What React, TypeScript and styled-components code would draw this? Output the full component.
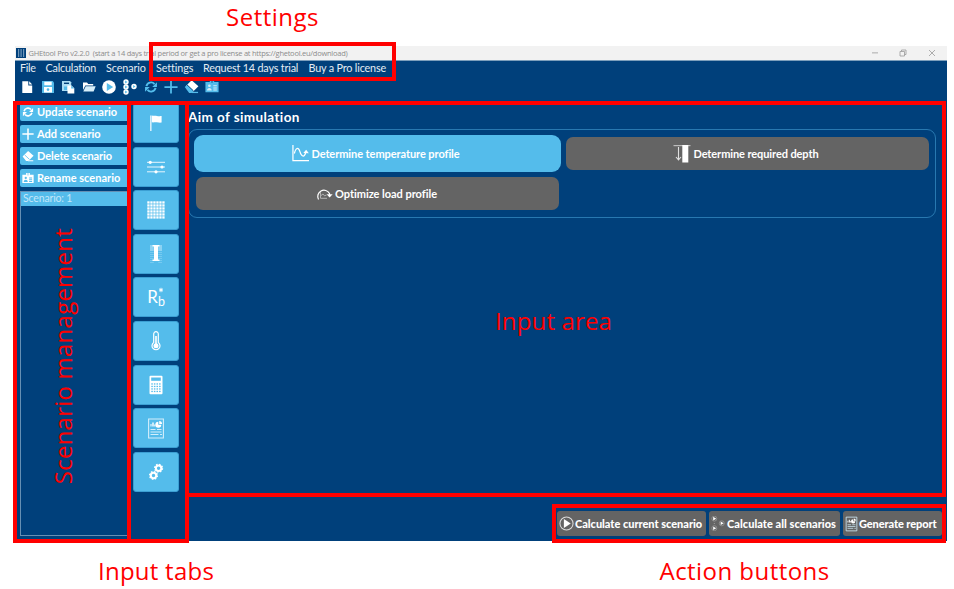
import React from 'react';
import styled, { createGlobalStyle } from 'styled-components';

const NAVY = '#00407b';
const SKY = '#54bceb';
const GREY = '#646464';
const RED = '#ff0000';

const GlobalStyle = createGlobalStyle`
  * { box-sizing: border-box; }
  body { margin: 0; background: #fff; overflow: hidden; }
`;

const Page = styled.div`
  position: relative;
  width: 954px;
  height: 589px;
  padding: 46px 7px 48px 15px;
  background: #fff;
  font-family: Lato, 'Open Sans', sans-serif;
`;

const AppWindow = styled.div`
  display: flex;
  flex-direction: column;
  width: 932px;
  height: 495px;
  background: ${NAVY};
`;

const TitleBar = styled.header`
  display: flex;
  align-items: center;
  height: 15px;
  flex: none;
  background: #f2f2f2;
  border-bottom: 1px solid #7d9fbc;
`;

const TitleText = styled.span`
  flex: 1;
  margin-left: 2.5px;
  color: #8c8c8c;
  font: 400 7.5px/14px 'Open Sans', sans-serif;
  letter-spacing: -0.25px;
  white-space: pre;
`;

const WindowControls = styled.div`
  display: flex;
  align-items: center;
  gap: 20.5px;
  padding-right: 11.5px;
`;

const MenuBar = styled.nav`
  display: flex;
  gap: 10px;
  height: 15px;
  padding-left: 5px;
  flex: none;
`;

const MenuItem = styled.span<{ $width: number; $spacing: number }>`
  width: ${(p) => p.$width}px;
  color: #e4ecf3;
  font-size: 10.8px;
  line-height: 14px;
  letter-spacing: ${(p) => p.$spacing}px;
  white-space: nowrap;
`;

const ToolBar = styled.div`
  display: flex;
  align-items: center;
  height: 23px;
  padding: 0 0 2px 4px;
  gap: 4.6px;
  flex: none;
`;

const Icon = styled.svg<{ $w?: number; $h?: number }>`
  display: block;
  flex: none;
  width: ${(p) => p.$w ?? 16}px;
  height: ${(p) => p.$h ?? p.$w ?? 16}px;
  fill: currentColor;
  color: #fff;
`;

const ToolSlot = styled.span`
  display: flex;
  justify-content: center;
  width: 16px;
`;

const Body = styled.div`
  display: grid;
  grid-template-columns: 118px 46px 1fr;
  flex: 1;
  min-height: 0;
`;

const Sidebar = styled.aside`
  display: flex;
  flex-direction: column;
  gap: 3.7px;
  padding: 4.4px 3px 5px 5px;
`;

const ScenarioButton = styled.button`
  display: flex;
  align-items: center;
  flex: none;
  gap: 3px;
  height: 18.1px;
  padding: 0 0 0 2px;
  border: 0;
  border-radius: 2px;
  background: ${SKY};
  color: #fff;
`;

const Label = styled.span<{ $weight?: number; $spacing?: number }>`
  font: ${(p) => p.$weight ?? 700} 11px/14px Lato, 'Open Sans', sans-serif;
  letter-spacing: ${(p) => p.$spacing ?? 0}px;
  white-space: nowrap;
  color: #fff;
`;

const ScenarioList = styled.div`
  flex: 1;
  border: 1px solid #668fb3;
  border-right: 0;
`;

const ScenarioItem = styled.div`
  height: 14px;
  padding-left: 2px;
  background: ${SKY};
  color: #c3e7f9;
  font-size: 10.5px;
  line-height: 13px;
  letter-spacing: -0.15px;
`;

const Tabs = styled.nav`
  display: flex;
  flex-direction: column;
  gap: 3.6px;
  padding-top: 4px;
`;

const Tab = styled.button`
  display: flex;
  align-items: center;
  justify-content: center;
  flex: none;
  height: 40px;
  padding: 0;
  border: 1px solid #3c9fd3;
  border-radius: 3px;
  background: ${SKY};
`;

const Main = styled.main`
  display: flex;
  flex-direction: column;
  min-width: 0;
  padding: 11px 11px 0 9px;
`;

const Heading = styled.h1`
  margin: 0;
  color: #fff;
  font-size: 13.5px;
  font-weight: 700;
  line-height: 15px;
  letter-spacing: 0.4px;
`;

const OptionGroup = styled.section`
  display: grid;
  grid-template-columns: 367px 363px;
  grid-template-rows: 37px 33px;
  gap: 5px;
  align-items: center;
  justify-items: center;
  height: 89px;
  margin-top: 4px;
  padding: 5px;
  border: 1px solid #2878b0;
  border-radius: 9px;
`;

const Option = styled.button<{ $selected?: boolean }>`
  display: flex;
  align-items: center;
  justify-content: center;
  gap: 2px;
  width: ${(p) => (p.$selected ? 367 : 363)}px;
  height: ${(p) => (p.$selected ? 37 : 33)}px;
  padding: 0 3px 0 0;
  border: 0;
  border-radius: ${(p) => (p.$selected ? 9 : 7)}px;
  background: ${(p) => (p.$selected ? SKY : GREY)};
`;

const Actions = styled.footer`
  display: flex;
  justify-content: flex-end;
  gap: 3px;
  margin: auto -6px 5px 0;
`;

const ActionButton = styled.button<{ $width: number }>`
  display: flex;
  align-items: center;
  gap: 1px;
  width: ${(p) => p.$width}px;
  height: 25px;
  padding: 0 0 0 2px;
  border: 0;
  border-radius: 3px;
  background: ${GREY};
`;

const Highlight = styled.div<{ $x: number; $y: number; $w: number; $h: number }>`
  position: absolute;
  left: ${(p) => p.$x}px;
  top: ${(p) => p.$y}px;
  width: ${(p) => p.$w}px;
  height: ${(p) => p.$h}px;
  border: 4px solid ${RED};
  pointer-events: none;
`;

const Note = styled.span<{ $x: number; $y: number; $spacing?: number }>`
  position: absolute;
  left: ${(p) => p.$x}px;
  top: ${(p) => p.$y}px;
  color: ${RED};
  font: 400 24px/32px 'Open Sans', 'Noto Sans', sans-serif;
  letter-spacing: ${(p) => p.$spacing ?? 0}px;
  white-space: nowrap;
`;

const VerticalNote = styled(Note)`
  writing-mode: vertical-rl;
  transform: rotate(180deg);
`;

type Size = { w?: number; h?: number };

const Refresh = ({ w = 12, tint = '#fff' }: { w?: number; tint?: string }) => (
  <Icon viewBox="0 0 16 16" $w={w}>
    <g fill="none" stroke={tint} strokeWidth="2.2">
      <path d="M2.8 7A5.3 5.3 0 0 1 12 4.600" />
      <path d="M13.2 9A5.3 5.3 0 0 1 4 11.400" />
    </g>
    <path fill={tint} d="M14.800 2.500v5.500H9.400zM1.200 13.500V8h5.400z" />
  </Icon>
);

const Plus = ({ w = 12, tint = '#fff' }: { w?: number; tint?: string }) => (
  <Icon viewBox="0 0 16 16" $w={w}>
    <path fill="none" stroke={tint} strokeWidth="2" d="M8 .5v15M.5 8h15" />
  </Icon>
);

const Eraser = ({ w = 12, tint = '#fff', cut = SKY }: { w?: number; tint?: string; cut?: string }) => (
  <Icon viewBox="0 0 16 16" $w={w}>
    <path fill="#fff" d="M8.2 1.2 15.4 7.6 9.5 13.5 2.5 7z" />
    <path fill={tint} d="M.8 8.5 3.3 6 10.2 12.4 8 14.8H5.5z" />
    <path stroke={cut} strokeWidth="1" d="M3.2 6.2 10 12.6" />
    <path fill={tint} d="M8 13.7h7v1.3H8z" />
  </Icon>
);

const Badge = ({ w = 13, tint = '#fff', cut = SKY }: { w?: number; tint?: string; cut?: string }) => (
  <Icon viewBox="0 0 16 14" $w={w} $h={w * 0.88}>
    <path fill={tint} d="M.5 2.2h5V0h2v3.2h1V0h2v2.2h5V14H.5z" />
    <circle cx="5" cy="6.6" r="1.5" fill={cut} />
    <path fill={cut} d="M2.3 12c0-4 5.4-4 5.4 0zM9.5 6h4v1.2h-4zM9.5 8.4h4v1.2h-4zM9.5 10.8h4V12h-4z" />
  </Icon>
);

const NewFile = () => (
  <Icon viewBox="0 0 16 16">
    <path d="M3.3 2.3h6v4.2h3.9v7.5H3.3z" />
    <path d="m10.2 2.3 3 3.2h-3z" />
  </Icon>
);

const Save = () => (
  <Icon viewBox="0 0 16 16">
    <path fill={SKY} d="M2 2h10.7L14 3.4V14H2z" />
    <path d="M4.3 2.8h7.4v3.4H4.3zM4 8h8v5.6H4z" />
    <circle cx="8" cy="10.6" r="1.3" fill={SKY} />
  </Icon>
);

const SaveAs = () => (
  <Icon viewBox="0 0 16 16">
    <path fill="#a9dcf4" d="M2 2h8l1.2 1.2V12H2z" />
    <path fill={NAVY} d="M4 3.6h5v1.4H4z" />
    <path fill={SKY} d="M4 7.5h3V11H4z" />
    <path d="M7.5 6.5h4l2.8 2.7V14.500H7.5z" />
    <path fill={SKY} d="M11.2 6.5v3h3z" />
  </Icon>
);

const Folder = () => (
  <Icon viewBox="0 0 16 16">
    <path d="M2 3.500h4l1.2 1.5h5V6.500H4.3L2 11z" />
    <path fill="#d6eefa" d="M4.7 7.300h10L12.6 12.500H2.3z" />
  </Icon>
);

const Play = () => (
  <Icon viewBox="0 0 16 16">
    <circle cx="8" cy="8" r="6.8" />
    <path fill={SKY} d="M5.800 4 12.200 8l-6.400 4z" />
  </Icon>
);

const PlayMany = () => (
  <Icon viewBox="0 0 16 16">
    {[[4, 3], [4, 8], [4, 13], [12, 7.5]].map(([x, y]) => (
      <g key={`${x}-${y}`}>
        <circle cx={x} cy={y} r="2.700" />
        <path fill={SKY} d={`M${x - 0.9} ${y - 1.4}l2.4 1.4-2.4 1.4z`} />
      </g>
    ))}
  </Icon>
);

const Flag = () => (
  <Icon viewBox="0 0 18 18" $w={18}>
    <path fill="#d3eefb" d="M3 1.5h1.6v15.5H3z" />
    <path d="M4.8 1.5c2 .7 3 .1 5 .4 1.500.3 3 .5 4.800.2v6.400c-2 .4-3-.2-4.800-.3-2-.2-3 .4-5 .1z" />
  </Icon>
);

const Sliders = () => (
  <Icon viewBox="0 0 18 18" $w={18}>
    <path stroke="#e6f5fd" strokeWidth="1" d="M0 4.300h18M0 9h18M0 13.800h18" />
    <circle cx="3.2" cy="4.300" r="1.6" />
    <circle cx="15" cy="9" r="1.6" />
    <circle cx="9" cy="13.800" r="1.6" />
  </Icon>
);

const steps = [0, 1, 2, 3, 4, 5];

const GridDots = () => (
  <Icon viewBox="0 0 18 18" $w={18}>
    {steps.map((r) =>
      steps.map((c) => <rect key={`${r}${c}`} x={0.3 + c * 3} y={0.3 + r * 3} width="2.300" height="2.300" />),
    )}
  </Icon>
);

const Borehole = () => (
  <Icon viewBox="0 0 18 20" $w={18} $h={20}>
    <g fill="#8dd3f3">
      <path d="M3 1h3.800v6H3zM11.200 1H15v6h-3.800z" />
      {[8, 10, 12, 14, 16, 18].map((y) => (
        <path key={y} opacity=".6" d={`M3 ${y}h3.800v1H3zM11.200 ${y}H15v1h-3.800z`} />
      ))}
    </g>
    <path d="M5.500 1h7v1.600H11V15.500h1.500V17h-7v-1.500H7V2.600H5.500z" />
  </Icon>
);

const Resistance = styled.span`
  display: grid;
  grid-template-columns: 11px 7px;
  grid-template-rows: 8px 12px;
  color: #fff;
  font: 400 17px/20px Lato, sans-serif;
`;

const Symbol = styled.span`
  grid-row: 1 / 3;
`;

const Subscript = styled.span`
  grid-column: 2;
  grid-row: 2;
  font-size: 12.5px;
  line-height: 14px;
`;

const Star = () => (
  <Icon viewBox="0 0 6 6" $w={6}>
    <path stroke="#fff" strokeWidth="1" d="M3 .8v4.400M1.100 1.900l3.800 2.200M4.900 1.900 1.100 4.100" />
  </Icon>
);

const Thermometer = () => (
  <Icon viewBox="0 0 18 20" $w={18} $h={20}>
    <path fill="none" stroke="#fff" strokeWidth="1.200" d="M6.700 11.500V3a2.300 2.300 0 0 1 4.600 0v8.500a4 4 0 1 1-4.600 0z" />
    <circle cx="9" cy="14.700" r="2.500" />
    <path d="M8.200 5h1.600v9H8.200z" />
  </Icon>
);

const Calculator = () => (
  <Icon viewBox="0 0 18 20" $w={18} $h={20}>
    <rect x="2.500" y=".7" width="13" height="18.500" rx="1" />
    <path fill={SKY} d="M4.200 2.500h9.600v3.300H4.200z" />
    {[0, 1, 2, 3].map((r) =>
      [0, 1, 2, 3].map((c) => (
        <rect key={`${r}${c}`} fill={SKY} x={4.3 + c * 2.6} y={8.3 + r * 2.5} width="1.500" height="1.300" />
      )),
    )}
  </Icon>
);

const Report = ({ w = 18, h = 21 }: Size) => (
  <Icon viewBox="0 0 18 21" $w={w} $h={h}>
    <path fill="none" stroke="#d3eefb" strokeWidth="1.100" d="M1.600 1h14.800v19H1.600z" />
    <path d="M11.300 3.800v3h3a3 3 0 1 1-3-3zM12.200 3a3 3 0 0 1 2.900 2.900h-2.900z" />
    <path d="M3.500 8.500V6h1v2.500zM5.300 8.500V4.500h1.400v4zM7.300 8.500v-2h1v2z" />
    <path fill="none" stroke="#d3eefb" d="M3.500 11.500h5M10 11.500h4.500M3.500 14h11M3.500 16.500h8M13 16.500h2" />
  </Icon>
);

const Gears = () => (
  <Icon viewBox="0 0 18 20" $w={18} $h={20}>
    <g fill="none" stroke="#fff">
      <g strokeWidth="2">
        <circle cx="11.600" cy="6.200" r="2.700" />
        <circle cx="6.500" cy="13.500" r="2.700" />
      </g>
      <g strokeWidth="1.300" strokeDasharray="1.600 1.450">
        <circle cx="11.600" cy="6.200" r="3.900" />
        <circle cx="6.500" cy="13.500" r="3.900" />
      </g>
    </g>
  </Icon>
);

const TemperatureProfile = () => (
  <Icon viewBox="0 0 18 18" $w={17}>
    <g fill="none" stroke="#fff" strokeWidth="1.300">
      <path d="M1 0v16.600h17" />
      <path d="M2.500 9C4 2.500 6.800 2 8.400 7c1.600 5.500 4.500 6.500 6.200 1" />
    </g>
    <path d="m12 8.500 3-3.400 2.800 3.700z" />
  </Icon>
);

const RequiredDepth = () => (
  <Icon viewBox="0 0 18 18" $w={18}>
    <path fill="#bbb" d="M.5 0h17v1.200H.5z" />
    <path d="M9.300 0h6v17.500h-6z" />
    <path fill="none" stroke="#e0e0e0" strokeWidth="1.100" d="M5.500 2v12.500M3 12l2.500 2.800L8 12" />
  </Icon>
);

const OptimizeLoad = () => (
  <Icon viewBox="0 0 18 14" $w={18} $h={14}>
    <path fill="none" stroke="#fff" strokeWidth="1.200" d="M3.500 12.500A6.200 6.200 0 1 1 14.500 6.500v2" />
    <path d="M11.600 7.200h6L14.600 10.600z" />
    <path fill="none" stroke="#bbb" strokeWidth=".9" d="M5.500 5v6.300h6.500M6 8.500l2-1.500 1.500 1.800 2-.8" />
  </Icon>
);

const CalculateOne = () => (
  <Icon viewBox="0 0 16 16" $w={15}>
    <circle cx="8" cy="8" r="7" fill="none" stroke="#ddd" strokeWidth="1.100" />
    <path d="M5.200 3.300 12.500 8l-7.300 4.700z" />
  </Icon>
);

const CalculateAll = () => (
  <Icon viewBox="0 0 16 16" $w={15}>
    {[[3.5, 2.8], [3.5, 13], [11.5, 7.8]].map(([x, y]) => (
      <g key={`${x}-${y}`}>
        <circle cx={x} cy={y} r="2.700" fill="none" stroke="#999" strokeWidth=".8" />
        <path d={`M${x - 1.2} ${y - 1.9}l3.200 1.900-3.200 1.900z`} />
      </g>
    ))}
    <circle cx="3.500" cy="8" r=".6" fill="#aaa" />
  </Icon>
);

const AppLogo = () => (
  <Icon viewBox="0 0 10 10" $w={10}>
    <path fill={NAVY} d="M0 0h10v10H0z" />
    <path fill="#6f96b9" d="M2 1h1.200v8H2zM4.500 1h1.200v8H4.500zM7 1h1.200v8H7z" />
  </Icon>
);

const LogoSlot = styled.span`
  padding-left: 1px;
`;

const menu = [
  { label: 'File', width: 15.5, spacing: -0.35 },
  { label: 'Calculation', width: 50.5, spacing: -0.2 },
  { label: 'Scenario', width: 40, spacing: -0.1 },
  { label: 'Settings', width: 37, spacing: -0.1 },
  { label: 'Request 14 days trial', width: 95.5, spacing: -0.18 },
  { label: 'Buy a Pro license', width: 78, spacing: -0.17 },
];

const tools = [
  { name: 'new', icon: <NewFile /> },
  { name: 'save', icon: <Save /> },
  { name: 'save-as', icon: <SaveAs /> },
  { name: 'open', icon: <Folder /> },
  { name: 'calculate', icon: <Play /> },
  { name: 'calculate-all', icon: <PlayMany /> },
  { name: 'update', icon: <Refresh w={14} tint={SKY} /> },
  { name: 'add', icon: <Plus w={14} tint={SKY} /> },
  { name: 'delete', icon: <Eraser w={15} tint={SKY} cut={NAVY} /> },
  { name: 'rename', icon: <Badge w={14} tint={SKY} cut="#d6eefa" /> },
];

const sideActions = [
  { label: 'Update scenario', icon: <Refresh />, spacing: 0.05 },
  { label: 'Add scenario', icon: <Plus />, spacing: 0 },
  { label: 'Delete scenario', icon: <Eraser />, spacing: -0.08 },
  { label: 'Rename scenario', icon: <Badge w={12} />, spacing: 0.02 },
];

export default function App() {
  return (
    <>
      <GlobalStyle />
      <Page>
        <AppWindow>
          <TitleBar>
            <LogoSlot><AppLogo /></LogoSlot>
            <TitleText>
              {'GHEtool Pro v2.2.0  (start a 14 days trial period or get a pro license at https://ghetool.eu/download)'}
            </TitleText>
            <WindowControls>
              <Icon viewBox="0 0 8 8" $w={8}><path fill="#999" d="M1 3.500h6v.8H1z" /></Icon>
              <Icon viewBox="0 0 8 8" $w={8}>
                <path fill="none" stroke="#999" strokeWidth=".8" d="M1 2.500h4.500V7H1zM2.500 2.300V1H7v4.500H5.700" />
              </Icon>
              <Icon viewBox="0 0 8 8" $w={8}>
                <path stroke="#999" strokeWidth=".8" d="m1 1 6 6M7 1 1 7" />
              </Icon>
            </WindowControls>
          </TitleBar>
          <MenuBar>
            {menu.map((m) => (
              <MenuItem key={m.label} $width={m.width} $spacing={m.spacing}>{m.label}</MenuItem>
            ))}
          </MenuBar>
          <ToolBar>
            {tools.map((t) => <ToolSlot key={t.name}>{t.icon}</ToolSlot>)}
          </ToolBar>
          <Body>
            <Sidebar>
              {sideActions.map((a) => (
                <ScenarioButton key={a.label}>
                  {a.icon}
                  <Label $spacing={a.spacing}>{a.label}</Label>
                </ScenarioButton>
              ))}
              <ScenarioList>
                <ScenarioItem>Scenario: 1</ScenarioItem>
              </ScenarioList>
            </Sidebar>
            <Tabs>
              <Tab><Flag /></Tab>
              <Tab><Sliders /></Tab>
              <Tab><GridDots /></Tab>
              <Tab><Borehole /></Tab>
              <Tab>
                <Resistance>
                  <Symbol>R</Symbol>
                  <Star />
                  <Subscript>b</Subscript>
                </Resistance>
              </Tab>
              <Tab><Thermometer /></Tab>
              <Tab><Calculator /></Tab>
              <Tab><Report /></Tab>
              <Tab><Gears /></Tab>
            </Tabs>
            <Main>
              <Heading>Aim of simulation</Heading>
              <OptionGroup>
                <Option $selected>
                  <TemperatureProfile />
                  <Label $spacing={-0.07}>Determine temperature profile</Label>
                </Option>
                <Option>
                  <RequiredDepth />
                  <Label $spacing={-0.09}>Determine required depth</Label>
                </Option>
                <Option>
                  <OptimizeLoad />
                  <Label $spacing={-0.03}>Optimize load profile</Label>
                </Option>
              </OptionGroup>
              <Actions>
                <ActionButton $width={149}>
                  <CalculateOne />
                  <Label $weight={900} $spacing={-0.03}>Calculate current scenario</Label>
                </ActionButton>
                <ActionButton $width={131}>
                  <CalculateAll />
                  <Label $weight={900} $spacing={0.04}>Calculate all scenarios</Label>
                </ActionButton>
                <ActionButton $width={99}>
                  <Report w={13} h={16} />
                  <Label $weight={900} $spacing={-0.1}>Generate report</Label>
                </ActionButton>
              </Actions>
            </Main>
          </Body>
        </AppWindow>

        <Highlight $x={149} $y={42} $w={247} $h={39} />
        <Highlight $x={13} $y={101} $w={118} $h={442} />
        <Highlight $x={127} $y={101} $w={62} $h={442} />
        <Highlight $x={185} $y={101} $w={761} $h={396} />
        <Highlight $x={552} $y={504} $w={394} $h={39} />

        <Note $x={226} $y={1} $spacing={0.5}>Settings</Note>
        <Note $x={495} $y={305} $spacing={0.15}>Input area</Note>
        <Note $x={98} $y={555} $spacing={0.25}>Input tabs</Note>
        <Note $x={659.5} $y={555} $spacing={0.45}>Action buttons</Note>
        <VerticalNote $x={47} $y={228} $spacing={0.23}>Scenario management</VerticalNote>
      </Page>
    </>
  );
}
